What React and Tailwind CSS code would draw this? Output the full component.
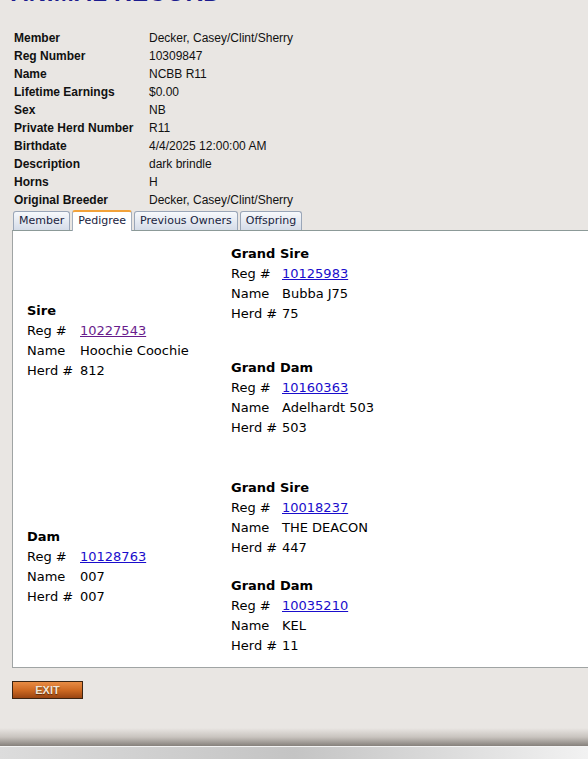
import React from "react";

const info = [
  ["Member", "Decker, Casey/Clint/Sherry"],
  ["Reg Number", "10309847"],
  ["Name", "NCBB R11"],
  ["Lifetime Earnings", "$0.00"],
  ["Sex", "NB"],
  ["Private Herd Number", "R11"],
  ["Birthdate", "4/4/2025 12:00:00 AM"],
  ["Description", "dark brindle"],
  ["Horns", "H"],
  ["Original Breeder", "Decker, Casey/Clint/Sherry"],
];

const tabs = ["Member", "Pedigree", "Previous Owners", "Offspring"];

function Animal({ title, reg, name, herd, visited, labelW }) {
  return (
    <div className="leading-[20px]">
      <div className="font-bold">{title}</div>
      <div className="flex">
        <span className={labelW}>Reg #</span>
        <a
          href="#"
          className={visited ? "text-[#681c8c] underline" : "text-[#1a0dcc] underline"}
        >
          {reg}
        </a>
      </div>
      <div className="flex">
        <span className={labelW}>Name</span>
        <span>{name}</span>
      </div>
      <div className="flex">
        <span className={labelW}>Herd #</span>
        <span>{herd}</span>
      </div>
    </div>
  );
}

export default function App() {
  return (
    <div className="w-[588px] h-[759px] overflow-hidden bg-[#e9e6e3] font-['Liberation_Sans',Arial,sans-serif] text-black flex flex-col">
      {/* page heading, scrolled mostly out of view */}
      <h1 className="h-[5px] overflow-hidden shrink-0 pl-[11px]">
        <span className="block -mt-[19px] text-[24px] leading-[24px] font-bold text-[#1c1c8e] tracking-[0.5px]">
          ANIMAL RECORD
        </span>
      </h1>

      {/* record details */}
      <div className="mt-[24px] pl-[14px] grid grid-cols-[135px_1fr] text-[12px] leading-[18px]">
        {info.map(([k, v]) => (
          <React.Fragment key={k}>
            <div className="font-bold text-[#111]">{k}</div>
            <div className="text-[#111]">{v}</div>
          </React.Fragment>
        ))}
      </div>

      {/* tab strip */}
      <div className="mt-[1px] pl-[13px] flex items-end gap-[2px] h-[20px] font-['DejaVu_Sans',Verdana,sans-serif] text-[11px] relative z-10">
        {tabs.map((t) =>
          t === "Pedigree" ? (
            <div
              key={t}
              className="h-[21px] px-[5px] flex items-center bg-white border border-b-0 border-[#a5afbd] border-t-2 border-t-[#f2a23a] rounded-t-[3px] text-[#1a2440] -mb-[1px]"
            >
              {t}
            </div>
          ) : (
            <div
              key={t}
              className="h-[19px] px-[5px] flex items-center bg-gradient-to-b from-[#f7f9fc] to-[#d5dce8] border border-b-0 border-[#9aa6b8] rounded-t-[3px] text-[#1a2440]"
            >
              {t}
            </div>
          )
        )}
      </div>

      {/* pedigree panel */}
      <div className="ml-[12px] w-[600px] h-[438px] shrink-0 bg-white border border-[#a0a4a4] border-t-[#8c9a98] pt-[13px] pl-[14px] font-['DejaVu_Sans',Verdana,sans-serif] text-[13px]">
        <div className="flex">
          <div className="w-[204px] flex items-center">
            <Animal title="Sire" reg="10227543" name="Hoochie Coochie" herd="812" visited labelW="w-[53px]" />
          </div>
          <div className="flex flex-col gap-[34px]">
            <Animal title="Grand Sire" reg="10125983" name="Bubba J75" herd="75" labelW="w-[51px]" />
            <Animal title="Grand Dam" reg="10160363" name="Adelhardt 503" herd="503" labelW="w-[51px]" />
          </div>
        </div>
        <div className="flex mt-[40px]">
          <div className="w-[204px] flex items-center">
            <Animal title="Dam" reg="10128763" name="007" herd="007" labelW="w-[53px]" />
          </div>
          <div className="flex flex-col gap-[18px]">
            <Animal title="Grand Sire" reg="10018237" name="THE DEACON" herd="447" labelW="w-[51px]" />
            <Animal title="Grand Dam" reg="10035210" name="KEL" herd="11" labelW="w-[51px]" />
          </div>
        </div>
      </div>

      {/* exit button */}
      <div className="mt-[13px] ml-[12px]">
        <button className="block w-[71px] h-[18px] border border-[#3b2412] bg-gradient-to-b from-[#e88c44] via-[#cf6a22] to-[#9a4512] text-[11px] font-bold leading-none text-[#f2e4d6] [text-shadow:0_1px_1px_#5a2a08]">
          EXIT
        </button>
      </div>

      <div className="flex-1" />

      {/* footer edge */}
      <div className="h-[18px] shrink-0 bg-gradient-to-b from-[#e9e6e3] via-[#c9c4bf] to-[#86817c]" />
      <div className="h-[1px] shrink-0 bg-[#f4f4f4]" />
      <div className="h-[12px] shrink-0 bg-gradient-to-r from-[#dcdcdc] via-[#c4c4c4] to-[#f2f2f2]" />
    </div>
  );
}
